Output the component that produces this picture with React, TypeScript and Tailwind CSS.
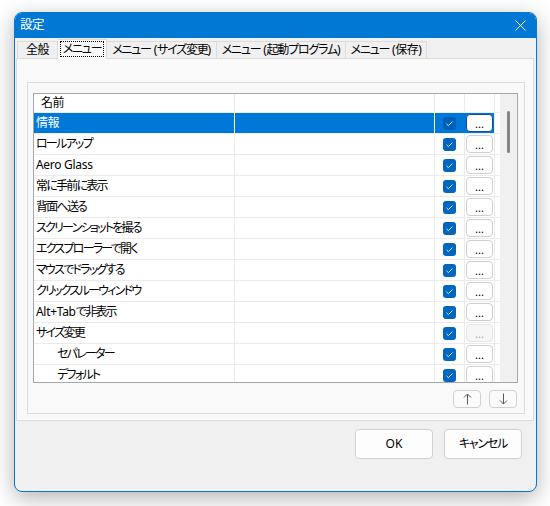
import React from "react";

type Row = { label: string; selected?: boolean; indent?: boolean; disabled?: boolean };

const rows: Row[] = [
  { label: "情報", selected: true },
  { label: "ロールアップ" },
  { label: "Aero Glass" },
  { label: "常に手前に表示" },
  { label: "背面へ送る" },
  { label: "スクリーンショットを撮る" },
  { label: "エクスプローラーで開く" },
  { label: "マウスでドラッグする" },
  { label: "クリックスルーウィンドウ" },
  { label: "Alt+Tabで非表示" },
  { label: "サイズ変更", disabled: true },
  { label: "セパレーター", indent: true },
  { label: "デフォルト", indent: true },
];

function T({ text, tight }: { text: string; tight?: boolean }) {
  const parts = text.split(/([\x00-\x7F]+)/).filter((p) => p.length > 0);
  return (
    <span className="whitespace-nowrap">
      {parts.map((p, i) =>
        /^[\x00-\x7F]+$/.test(p) ? (
          <span key={i} className="tracking-[-0.3px]">
            {p}
          </span>
        ) : /[\u3040-\u30ff]/.test(p) ? (
          <span key={i} className={tight ? "tracking-[-1.75px]" : "tracking-[-1.2px]"}>
            {p}
          </span>
        ) : (
          <span key={i} className="tracking-[-0.6px]">
            {p}
          </span>
        )
      )}
    </span>
  );
}

function Check({ selected }: { selected?: boolean }) {
  return (
    <div
      className={`w-[13px] h-[13px] rounded-[3px] flex items-center justify-center ${
        selected ? "bg-[#005fb8]" : "bg-[#0067c0]"
      }`}
    >
      <svg width="13" height="13" viewBox="0 0 13 13">
        <path d="M3.5 6.8 L5.4 8.6 L9.4 4.6" fill="none" stroke="#d6e6f7" strokeWidth="1" />
      </svg>
    </div>
  );
}

function DotsButton({ selected, disabled }: { selected?: boolean; disabled?: boolean }) {
  const cls = disabled
    ? "bg-[#f6f6f6] border-[#e6e6e6] text-[#a8a8a8]"
    : selected
    ? "bg-white border-[#0a4f94] text-black"
    : "bg-white border-[#cfcfcf] text-black";
  return (
    <div
      className={`w-[27px] h-[18px] rounded-[4px] border flex items-end justify-center pb-[2px] text-[11px] leading-none ${cls}`}
    >
      ...
    </div>
  );
}

function TableRow({ row }: { row: Row }) {
  const sel = !!row.selected;
  return (
    <div className="flex h-[21px] shrink-0 border-b border-[#ebebeb]">
      <div
        className={`w-[201px] shrink-0 border-r flex items-center whitespace-nowrap ${
          sel ? "bg-[#0078d7] text-white border-white" : "text-black border-[#ebebeb]"
        } ${row.indent ? "pl-[23px]" : "pl-[2px]"}`}
      >
        <T text={row.label} tight />
      </div>
      <div
        className={`w-[200px] shrink-0 border-r ${
          sel ? "bg-[#0078d7] border-white" : "border-[#ebebeb]"
        }`}
      />
      <div
        className={`w-[30px] shrink-0 border-r flex items-center justify-center ${
          sel ? "bg-[#0078d7] border-[#0078d7]" : "border-[#ebebeb]"
        }`}
      >
        <Check selected={sel} />
      </div>
      <div
        className={`w-[30px] shrink-0 border-r flex items-center justify-center ${
          sel ? "bg-[#0078d7] border-[#ebebeb]" : "border-[#ebebeb]"
        }`}
      >
        <DotsButton selected={sel} disabled={row.disabled} />
      </div>
      <div className="w-[5px] shrink-0" />
    </div>
  );
}

function SmallArrowButton({ dir }: { dir: "up" | "down" }) {
  return (
    <div className="w-[28px] h-[18px] rounded-[4px] border border-[#d0d0d0] bg-[#fbfbfb] flex items-center justify-center">
      <svg width="9" height="12" viewBox="0 0 9 12">
        {dir === "up" ? (
          <path d="M4.5 1 V11.5 M1 4.5 L4.5 1 L8 4.5" fill="none" stroke="#5a5a5a" strokeWidth="1" />
        ) : (
          <path d="M4.5 0.5 V11 M1 7.5 L4.5 11 L8 7.5" fill="none" stroke="#5a5a5a" strokeWidth="1" />
        )}
      </svg>
    </div>
  );
}

export default function App() {
  return (
    <div className="w-[550px] h-[506px] bg-white pt-[12px] pl-[14px] font-['Noto_Sans','Noto_Sans_CJK_JP',sans-serif] [font-feature-settings:'palt'] text-[12px] text-black">
      <div className="w-[523px] h-[480px] border border-[#0078d4] rounded-[8px] overflow-hidden flex flex-col bg-[#f0f0f0] shadow-[0_6px_22px_rgba(0,0,0,0.3)]">
        {/* Title bar */}
        <div className="h-[25px] shrink-0 bg-[#0078d4] flex items-center justify-between pl-[5px] pr-[10px] text-white">
          <span className="text-[12.5px] leading-none">
            <T text="設定" />
          </span>
          <svg width="11" height="11" viewBox="0 0 11 11">
            <path d="M0.5 0.5 L10.5 10.5 M10.5 0.5 L0.5 10.5" stroke="#ffffff" strokeWidth="1" />
          </svg>
        </div>

        {/* Tabs */}
        <div className="h-[20px] shrink-0 flex items-end pl-[2px] leading-none">
          <div className="w-[41px] h-[17px] border-l border-t border-r border-[#dcdcdc] flex items-center justify-center">
            <T text="全般" />
          </div>
          <div className="relative z-10 w-[49px] h-[20px] -mb-[1px] bg-[#f9f9f9] border-t border-r border-[#dcdcdc] flex items-start pt-[1px] pl-[2px]">
            <div className="w-[44px] h-[16px] border border-dotted border-black flex items-center justify-center">
              <T text="メニュー" />
            </div>
          </div>
          <div className="w-[110px] h-[17px] border-t border-r border-[#dcdcdc] flex items-center justify-center">
            <T text="メニュー (サイズ変更)" />
          </div>
          <div className="w-[129px] h-[17px] border-t border-r border-[#dcdcdc] flex items-center justify-center">
            <T text="メニュー (起動プログラム)" />
          </div>
          <div className="w-[81px] h-[17px] border-t border-r border-[#dcdcdc] flex items-center justify-center">
            <T text="メニュー (保存)" />
          </div>
        </div>

        {/* Tab page */}
        <div className="ml-[1px] w-[518px] h-[363px] shrink-0 border border-[#dcdcdc] bg-[#f9f9f9] pt-[23px] pl-[10px]">
          <div className="w-[498px] h-[332px] border border-[#dcdcdc] pt-[10px] pl-[5px] flex flex-col">
            {/* Table */}
            <div className="w-[485px] h-[290px] shrink-0 border border-[#a6a6ad] bg-white flex overflow-hidden">
              <div className="w-[466px] shrink-0 flex flex-col overflow-hidden">
                <div className="flex h-[19px] shrink-0 border-b border-[#ebebeb]">
                  <div className="w-[201px] shrink-0 border-r border-[#ebebeb] flex items-center pl-[7px]">
                    <T text="名前" />
                  </div>
                  <div className="w-[200px] shrink-0 border-r border-[#ebebeb]" />
                  <div className="w-[30px] shrink-0 border-r border-[#ebebeb]" />
                  <div className="w-[30px] shrink-0 border-r border-[#ebebeb]" />
                  <div className="w-[5px] shrink-0" />
                </div>
                {rows.map((r) => (
                  <TableRow key={r.label} row={r} />
                ))}
              </div>
              <div className="w-[17px] shrink-0 bg-[#f0f0f0] flex flex-col items-center pt-[17px]">
                <div className="w-[3px] h-[42px] rounded-full bg-[#858585]" />
              </div>
            </div>
            <div className="w-[485px] flex justify-end gap-[8px] pt-[7px] pr-[1px]">
              <SmallArrowButton dir="up" />
              <SmallArrowButton dir="down" />
            </div>
          </div>
        </div>

        {/* Bottom buttons */}
        <div className="flex-1 flex justify-end items-start gap-[11px] pt-[8px] pr-[14px]">
          <div className="w-[78px] h-[30px] rounded-[4px] border border-[#d0d0d0] bg-[#fdfdfd] flex items-center justify-center">
            OK
          </div>
          <div className="w-[78px] h-[30px] rounded-[4px] border border-[#d0d0d0] bg-[#fdfdfd] flex items-center justify-center">
            <T text="キャンセル" />
          </div>
        </div>
      </div>
    </div>
  );
}
